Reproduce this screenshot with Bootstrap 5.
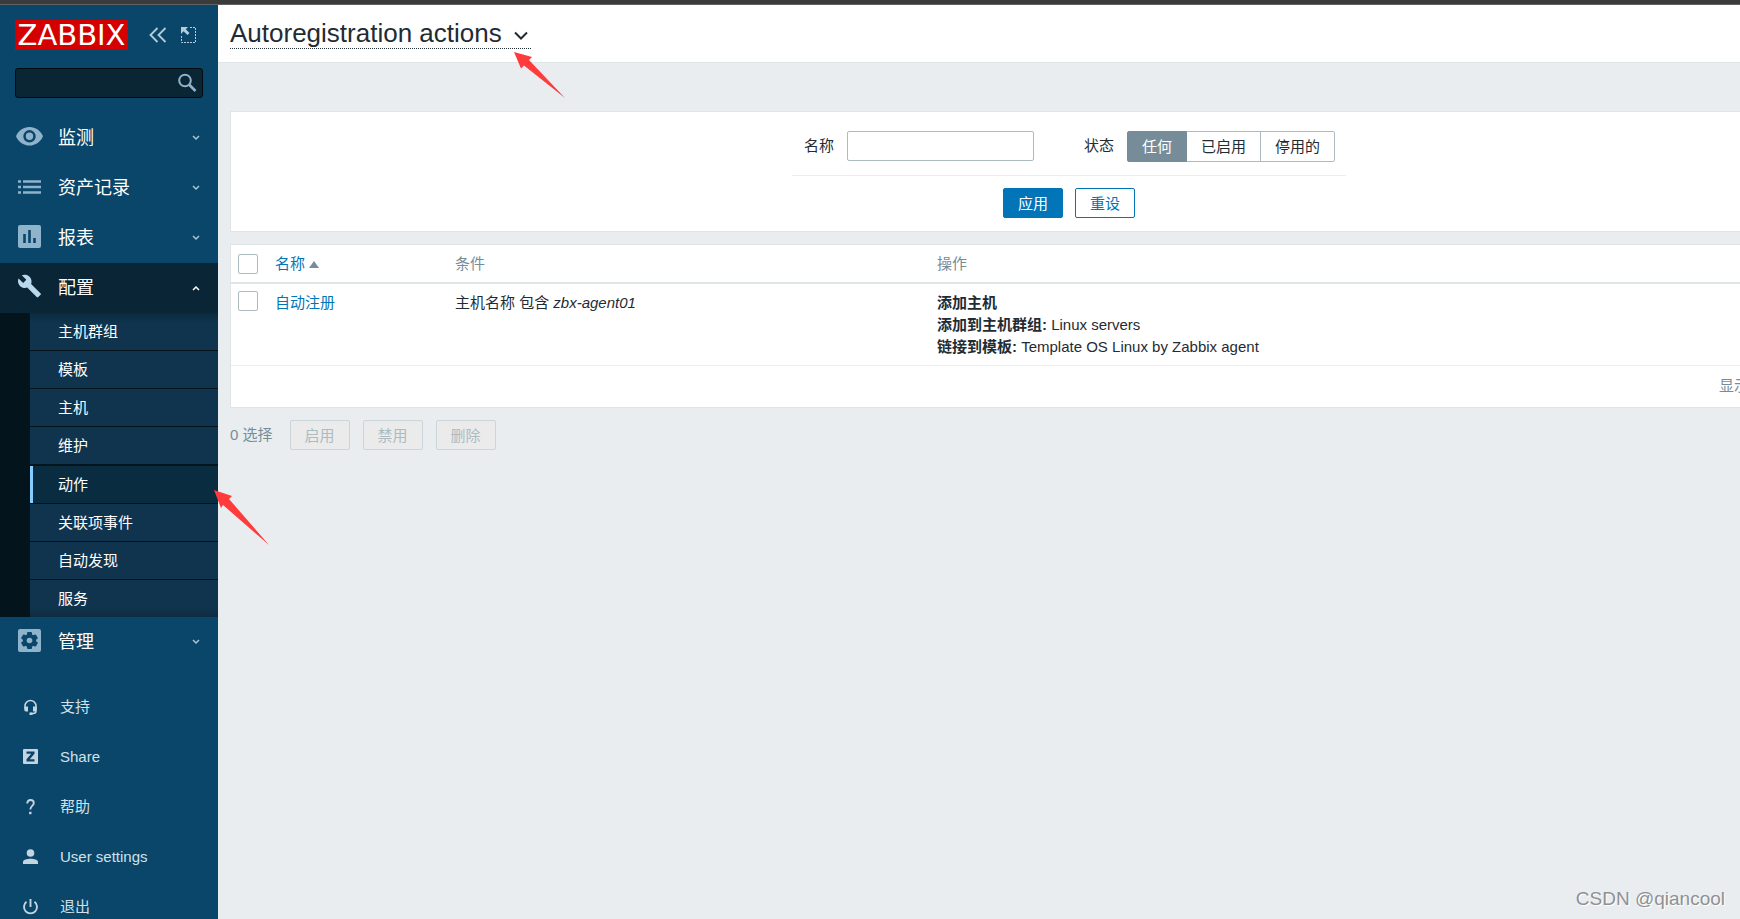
<!DOCTYPE html>
<html lang="zh-CN">
<head>
<meta charset="utf-8">
<meta name="viewport" content="width=device-width, initial-scale=1">
<title>Autoregistration actions</title>
<link href="https://cdn.jsdelivr.net/npm/bootstrap@5.3.0/dist/css/bootstrap.min.css" rel="stylesheet">
<style>
  body { font-family: "Liberation Sans", "Noto Sans CJK SC", sans-serif; font-size: 15px; line-height: 22px; color: #1f2c33; background: #e9edf0; overflow: hidden; }
  a { text-decoration: none; color: #0275b8; }
  .window-edge { height: 5px; background: #3b3b3b; border-bottom: 1px solid #5f6265; }
  .sidebar { width: 218px; background: #0a466a; }
  .sidebar a { color: #fff; }
  .brand-row { padding: 15px 15px 18px; height: 63px; }
  .brand-row .logo { background: #d40000; color: #fff; width: 113px; height: 30px; font: 29px/31px "DejaVu Sans", sans-serif; margin-right: 21px; }
  .icon-btn { border: 0; background: none; padding: 0; color: #b5cdda; display: flex; }
  .search { margin: 0 15px 15px; height: 30px; background: #0a2635; border: 1px solid #020b12; border-radius: 3px; }
  .search input { background: none; border: 0; min-width: 0; color: #fff; outline: 0; }
  .main-link { height: 50px; font-size: 18px; padding: 0 18px; }
  .main-link .pic { width: 40px; padding-bottom: 3px; color: #8fb3cb; }
  .main-link.open { background: #0a2536; }
  .main-link.open .pic { color: #b9d8ec; }
  .main-link .arrow { margin-left: auto; color: #a9c5d6; }
  .submenu { padding-left: 30px; background: #04141d; }
  .submenu a { display: block; height: 38px; line-height: 37px; padding-left: 28px; background: #10344e; border-top: 1px solid #04141d; }
  .submenu li:first-child a { height: 37px; border-top: 0; background: linear-gradient(#0b2a3e, #10344e 10px); }
  .submenu li:last-child a { background: linear-gradient(#10344e 27px, #0e2c40); }
  .submenu a.current { height: 39px; border-top-width: 2px; background: #0a2c41; box-shadow: inset 3px 0 #85cdff; }
  .user-links { margin-top: 15px; }
  .user-links a { height: 50px; padding-left: 22px; color: #d3e0e8; }
  .user-links .pic { width: 38px; padding-bottom: 1px; color: #c3d5df; }
  .page-head { height: 58px; padding: 0 12px; background: #fff; border-bottom: 1px solid #dfe4e7; }
  .title-btn { border: 0; border-bottom: 1px dotted #1f2c33; background: none; padding: 5px 3px 0 0; margin-top: 9px; height: 35px; font-size: 26px; font-weight: 400; line-height: 29px; color: #1f2c33; gap: 12px; }
  /* the list is wider than the window and runs past its right side */
  .wide { width: calc(100% + 168px); padding: 48px 0 0 12px; }
  .panel { background: #fff; border: 1px solid #dfe4e7; }
  .filter { height: 121px; padding-top: 19px; margin-bottom: 12px; }
  .filter form { width: 554px; }
  .filter-fields { padding: 0 0 0 12px; height: 45px; line-height: 30px; border-bottom: 1px solid #ebeef0; }
  .text-field { width: 187px; height: 30px; margin: 0 50px 0 13px; border: 1px solid #acbbc2; border-radius: 2px; }
  .segments { margin-left: 13px; }
  .segments .btn { --bs-btn-active-bg: #768d99; --bs-btn-active-border-color: #768d99; font-size: 15px; line-height: 29px; padding: 0 14px; border: 1px solid #acbbc2; border-radius: 2px; color: #1f2c33; }
  .segments .btn-check:checked + .btn { color: #fff; }
  .btn-z { --bs-btn-bg: #0275b8; width: 60px; height: 30px; padding: 0; font-size: 15px; line-height: 29px; border: 1px solid #0275b8; border-radius: 2px; color: #fff; }
  .btn-z.hollow { --bs-btn-bg: #fff; color: #0275b8; }
  .btn-z:disabled { opacity: 1; background: #ebebeb; border-color: #ccd5d9; color: #acbbc2; }
  .form-buttons { gap: 12px; padding-top: 12px; }
  .actions-table { width: 100%; table-layout: fixed; }
  .actions-table th { font-weight: 400; color: #768d99; height: 38px; padding: 0; border-bottom: 2px solid #dfe4e7; }
  .actions-table td { vertical-align: top; padding: 8px 0 7px; border-bottom: 1px solid #ebeef0; }
  .actions-table tfoot td { height: 41px; border: 0; padding: 9px 158px 0 0; text-align: right; color: #768d99; white-space: nowrap; }
  .actions-table .tick { padding: 0 0 0 7px; }
  .tick input { appearance: none; display: block; width: 20px; height: 20px; border: 1px solid #acbbc2; border-radius: 2px; background: #fff; margin: 0; }
  tbody .tick input { margin-top: 7px; }
  .c-tick { width: 44px; } .c-name { width: 180px; } .c-cond { width: 482px; }
  .bulk { margin-top: 12px; color: #768d99; gap: 13px; }
  .bulk span { margin-right: 4px; }
  .note { position: absolute; z-index: 5; pointer-events: none; fill: #ff3b3b; }
  .note-title { left: 514px; top: 52px; }
  .note-menu { left: 214px; top: 490px; }
  .watermark { position: absolute; right: 15px; bottom: 8px; font-size: 19px; line-height: 24px; color: #8f9193; text-shadow: 1px 1px #fff; }
</style>
</head>
<body class="vh-100 d-flex flex-column position-relative">
<div class="window-edge flex-shrink-0"></div>
<div class="d-flex flex-grow-1 overflow-hidden">
  <aside class="sidebar flex-shrink-0">
    <div class="brand-row d-flex align-items-center">
      <a class="logo text-center" href="#">ZABBIX</a>
      <button class="icon-btn" aria-label="收起"><svg width="18" height="16" fill="none" stroke="currentColor" stroke-width="1.8"><path d="M8.500 1 1.500 8l7 7M16.500 1l-7 7 7 7"/></svg></button>
      <button class="icon-btn ms-auto" style="margin-right:7px" aria-label="隐藏"><svg width="15" height="16" fill="none" stroke="currentColor"><path d="M9 .5h5.500v15H.5V9" stroke-dasharray="2 1"/><path d="M0 0h7L4.800 2.200 8.500 6 6.500 8 2.500 4.300 0 7z" fill="currentColor" stroke="none"/></svg></button>
    </div>
    <form class="search d-flex align-items-center" role="search">
      <input class="flex-grow-1" type="text" aria-label="搜索">
      <button class="icon-btn" style="margin-right:5px" type="button" aria-label="搜索"><svg width="20" height="20" fill="none" stroke="#8fb3cb"><circle cx="8" cy="7.500" r="5.800" stroke-width="2"/><path d="m12 11.500 6.500 6.500" stroke-width="2.600"/></svg></button>
    </form>
    <nav>
      <a class="main-link d-flex align-items-center" href="#"><span class="pic d-flex"><svg style="margin-left:-2px" width="27" height="20" viewBox="0 0 27 20"><path fill="currentColor" fill-rule="evenodd" d="M13.500 0C7.400 0 2.200 3.800 0 9.300c2.200 5.500 7.400 9.300 13.500 9.300S24.800 14.800 27 9.300C24.800 3.800 19.600 0 13.500 0zm0 15.500a6.200 6.200 0 1 1 0-12.400 6.200 6.200 0 0 1 0 12.400zm0-9.900a3.700 3.700 0 1 0 0 7.400 3.700 3.700 0 0 0 0-7.400z"/></svg></span>监测<svg class="arrow" width="8" height="6"><path d="m1 1 3 3 3-3" fill="none" stroke="currentColor" stroke-width="1.500"/></svg></a>
      <a class="main-link d-flex align-items-center" href="#"><span class="pic"><svg width="23" height="16" class="d-block"><path d="M0 2.500h3M0 8h3m-3 5.500h3M5 2.500h18M5 8h18M5 13.500h18" stroke="currentColor" stroke-width="2.500"/></svg></span>资产记录<svg class="arrow" width="8" height="6"><path d="m1 1 3 3 3-3" fill="none" stroke="currentColor" stroke-width="1.500"/></svg></a>
      <a class="main-link d-flex align-items-center" href="#"><span class="pic"><svg width="23" height="24" class="d-block"><rect width="23" height="23" rx="2" fill="currentColor"/><path d="M6.500 9v9M11.500 5v13M16.500 13v5" stroke="#0a466a" stroke-width="2.600"/></svg></span>报表<svg class="arrow" width="8" height="6"><path d="m1 1 3 3 3-3" fill="none" stroke="currentColor" stroke-width="1.500"/></svg></a>
      <a class="main-link open d-flex align-items-center" href="#"><span class="pic"><svg width="23" height="26" viewBox="0 0 23 26" class="d-block"><path fill="currentColor" d="M22.600 19.400 13.100 9.900c.9-2.400.4-5.200-1.600-7.200C9.400.6 6.300.2 3.800 1.300l4.500 4.500-3.100 3.100L.6 4.400C-.6 6.900 0 10 2 12c2 2 4.800 2.500 7.200 1.600l9.500 9.500c.4.4 1.100.4 1.500 0l2.400-2.400c.5-.4.5-1.100 0-1.300z"/></svg></span>配置<svg class="arrow text-white" width="8" height="6"><path d="m1 5 3-3 3 3" fill="none" stroke="currentColor" stroke-width="1.500"/></svg></a>
      <ul class="submenu list-unstyled mb-0">
        <li><a href="#">主机群组</a></li>
        <li><a href="#">模板</a></li>
        <li><a href="#">主机</a></li>
        <li><a href="#">维护</a></li>
        <li><a class="current" href="#" aria-current="page">动作</a></li>
        <li><a href="#">关联项事件</a></li>
        <li><a href="#">自动发现</a></li>
        <li><a href="#">服务</a></li>
      </ul>
      <a class="main-link d-flex align-items-center" href="#"><span class="pic"><svg width="23" height="24" class="d-block"><rect width="23" height="23" rx="2" fill="currentColor"/><g fill="#0a466a"><circle cx="11.500" cy="11.500" r="6.600"/><rect x="9" y="3" width="5" height="17" rx="1"/><rect x="9" y="3" width="5" height="17" rx="1" transform="rotate(60 11.500 11.500)"/><rect x="9" y="3" width="5" height="17" rx="1" transform="rotate(120 11.500 11.500)"/></g><circle cx="11.500" cy="11.500" r="2.800" fill="currentColor"/></svg></span>管理<svg class="arrow" width="8" height="6"><path d="m1 1 3 3 3-3" fill="none" stroke="currentColor" stroke-width="1.500"/></svg></a>
    </nav>
    <nav class="user-links">
      <a class="d-flex align-items-center" href="#"><span class="pic"><svg width="17" height="16" class="d-block"><path d="M3 9V7a5.500 5.500 0 0 1 11 0v5q0 2.500-3 2.500H8.500" fill="none" stroke="currentColor" stroke-width="1.500"/><path d="M2.200 7.500H6v5H4q-1.800 0-1.800-2zM11 7.500h3.800v3q0 2-1.800 2h-2zM7.500 13.500h3V16h-3z" fill="currentColor"/></svg></span>支持</a>
      <a class="d-flex align-items-center" href="#"><span class="pic"><svg width="17" height="15" class="d-block"><rect x="1" width="15" height="15" rx="1" fill="currentColor"/><path d="M4.500 2.500h8v2.200L7.800 10.200h4.700v2.300h-8v-2.200L9.200 4.800H4.500z" fill="#0a466a"/></svg></span>Share</a>
      <a class="d-flex align-items-center" href="#"><span class="pic"><svg width="17" height="16" class="d-block"><path d="M5.200 4.500C5.200 2 6.500 1 8.500 1s3.300 1.200 3.300 3c0 2.800-3.500 3-3.500 6.500" fill="none" stroke="currentColor" stroke-width="1.900"/><path d="M7.100 12.800h2.400v2.400H7.100z" fill="currentColor"/></svg></span>帮助</a>
      <a class="d-flex align-items-center" href="#"><span class="pic"><svg width="17" height="16" class="d-block" fill="currentColor"><circle cx="8.500" cy="4" r="3.800"/><path d="M1 15v-2c0-2 4-3.200 7.500-3.200S16 11 16 13v2z"/></svg></span>User settings</a>
      <a class="d-flex align-items-center" href="#"><span class="pic"><svg width="17" height="16" class="d-block" fill="none" stroke="currentColor" stroke-width="1.900"><path d="M8.500 0v8M4.500 2.800a6.500 6.500 0 1 0 8 0"/></svg></span>退出</a>
    </nav>
  </aside>

  <main class="flex-grow-1 overflow-hidden">
    <header class="page-head">
      <h1 class="m-0 d-flex"><button class="title-btn d-flex align-items-center">Autoregistration actions<svg width="14" height="10" class="mt-1"><path d="m1 1.500 6 6 6-6" fill="none" stroke="currentColor" stroke-width="2"/></svg></button></h1>
    </header>
    <div class="wide">
      <section class="panel filter">
        <form class="mx-auto">
          <div class="filter-fields d-flex">
            <label for="f-name">名称</label>
            <input id="f-name" class="text-field" type="text">
            <span id="f-status">状态</span>
            <div class="btn-group segments align-self-start" role="group" aria-labelledby="f-status">
              <input class="btn-check" type="radio" name="status" id="s-any" checked><label class="btn" for="s-any">任何</label>
              <input class="btn-check" type="radio" name="status" id="s-on"><label class="btn" for="s-on">已启用</label>
              <input class="btn-check" type="radio" name="status" id="s-off"><label class="btn" for="s-off">停用的</label>
            </div>
          </div>
          <div class="form-buttons d-flex justify-content-center">
            <button class="btn btn-z" type="button">应用</button>
            <button class="btn btn-z hollow" type="reset">重设</button>
          </div>
        </form>
      </section>
      <section class="panel">
        <table class="actions-table">
          <colgroup><col class="c-tick"><col class="c-name"><col class="c-cond"><col></colgroup>
          <thead><tr>
            <th class="tick"><input type="checkbox" aria-label="全选"></th>
            <th><a href="#">名称 <svg width="10" height="7"><path d="m5 0 5 7H0z" fill="#768d99"/></svg></a></th>
            <th>条件</th><th>操作</th>
          </tr></thead>
          <tbody><tr>
            <td class="tick"><input type="checkbox" aria-label="自动注册"></td>
            <td><a href="#">自动注册</a></td>
            <td>主机名称 包含 <em>zbx-agent01</em></td>
            <td><b>添加主机</b><br><b>添加到主机群组:</b> Linux servers<br><b>链接到模板:</b> Template OS Linux by Zabbix agent</td>
          </tr></tbody>
          <tfoot><tr><td colspan="4">显示</td></tr></tfoot>
        </table>
      </section>
      <div class="bulk d-flex align-items-center">
        <span>0 选择</span>
        <button class="btn btn-z" disabled>启用</button>
        <button class="btn btn-z" disabled>禁用</button>
        <button class="btn btn-z" disabled>删除</button>
      </div>
    </div>
  </main>
</div>
<svg class="note note-title" width="52" height="47"><path d="m0 0 18 5-3 3 36 38L10 13.500 7 16.500z"/></svg>
<svg class="note note-menu" width="56" height="56"><path d="m0 0 18 6-3 3 40 46L9 15l-2 3z"/></svg>
<div class="watermark">CSDN @qiancool</div>
</body>
</html>
